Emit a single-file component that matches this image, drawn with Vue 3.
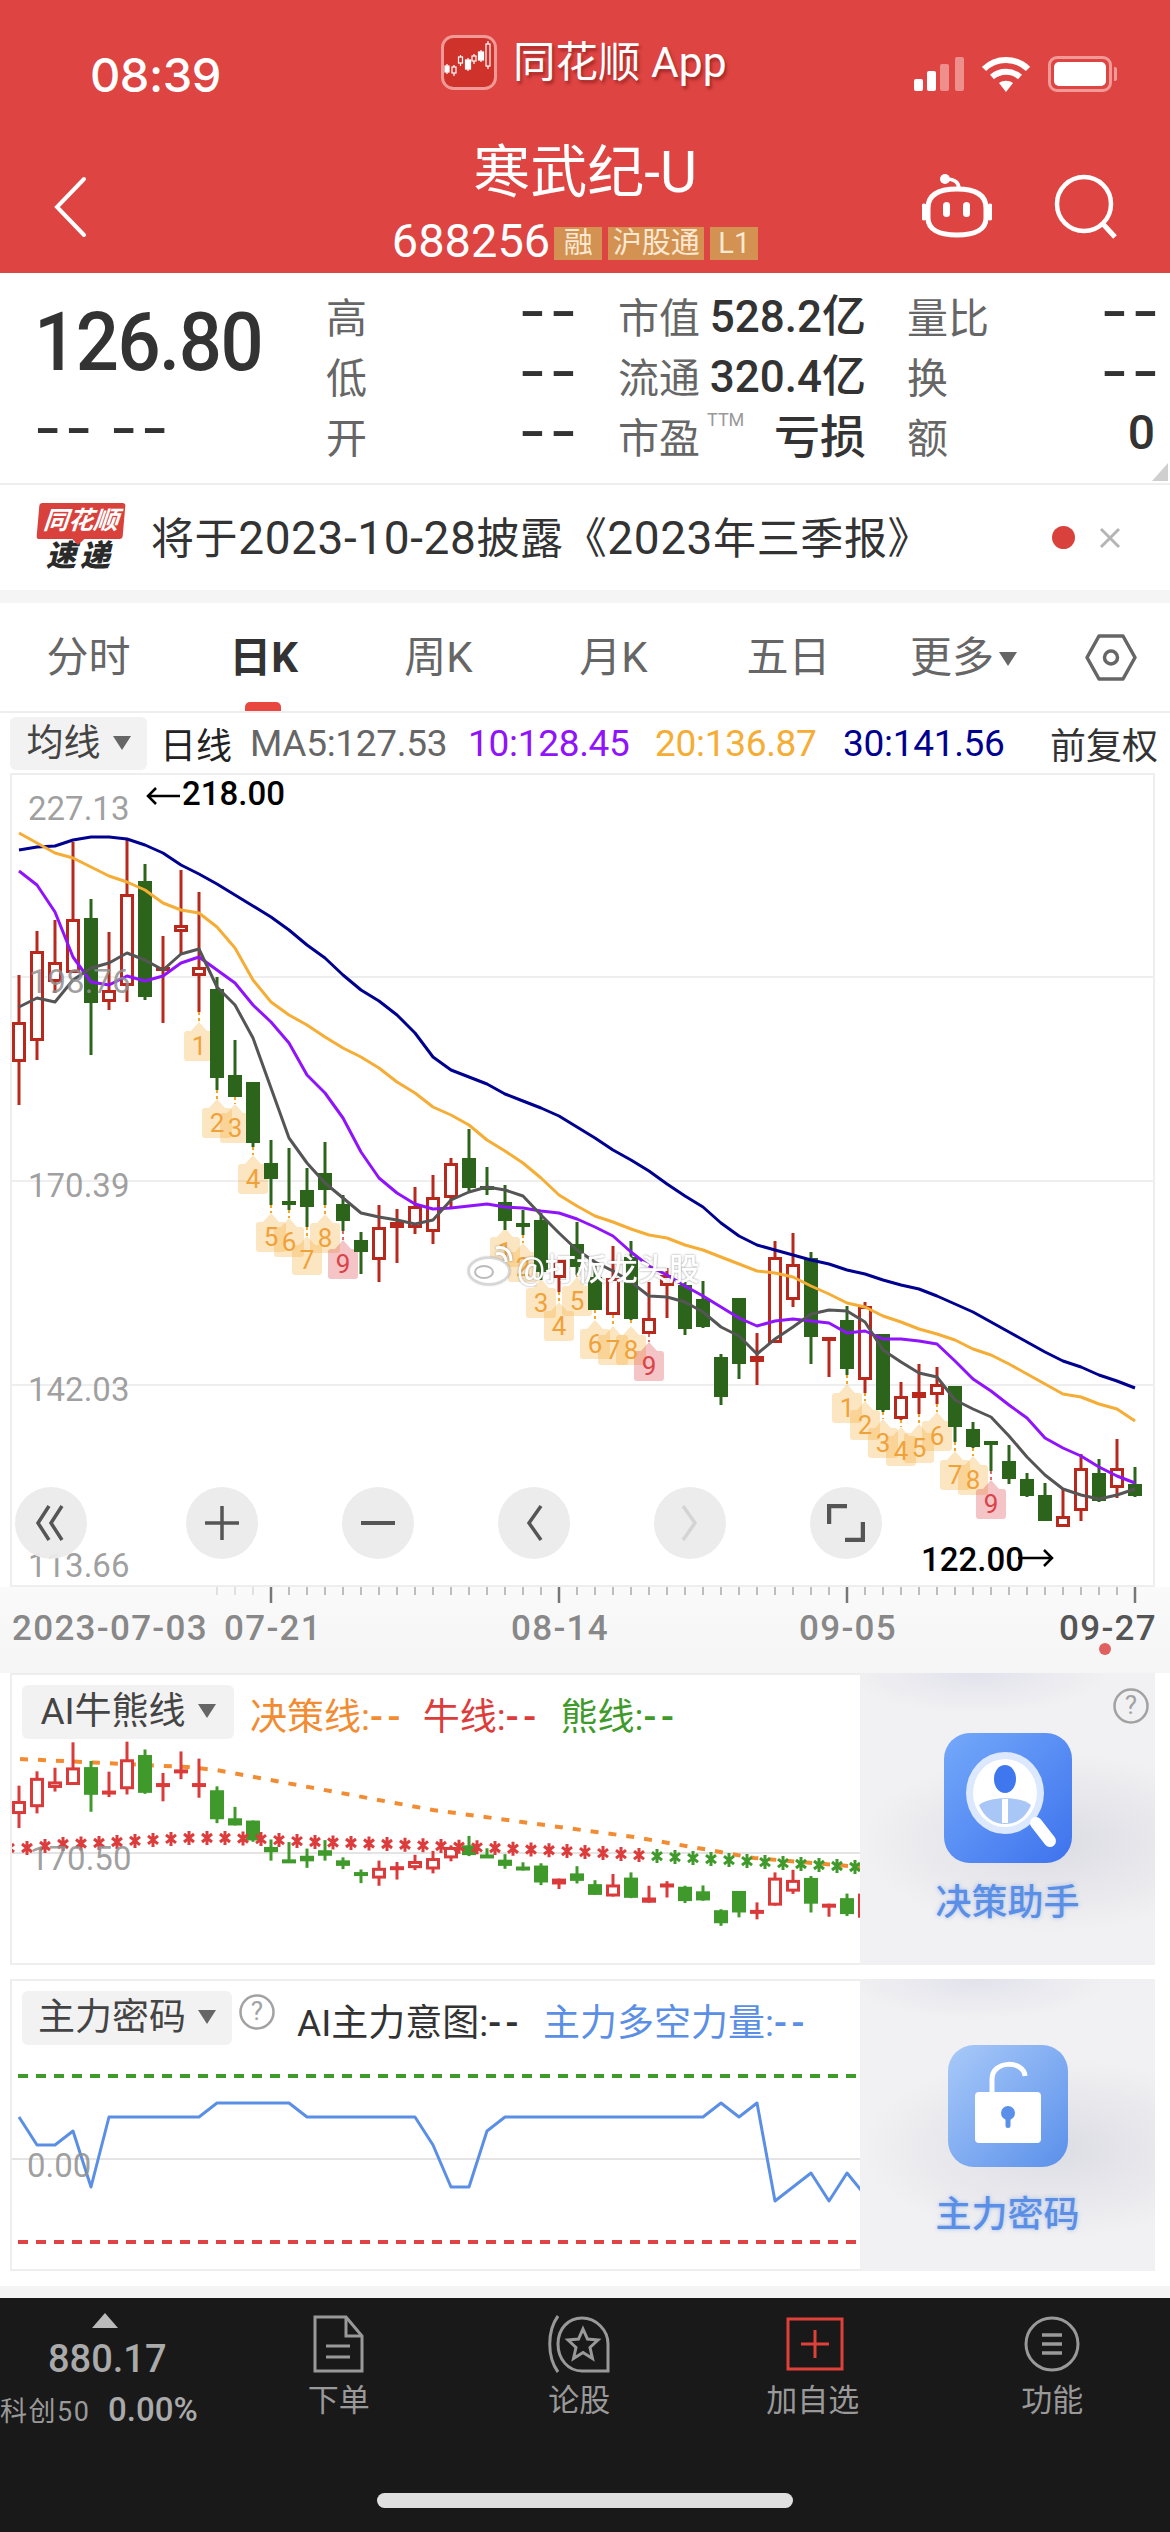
<template>
  <div class="page">
    <header class="topbar">
      <div class="status">
        <div class="time">08:39</div>
        <div class="applabel">
          <svg class="appicon" width="56" height="55" viewBox="0 0 56 55">
            <rect x="1.500" y="1.500" width="53" height="52" rx="11" fill="#cf322b" stroke="#ef9a96" stroke-width="3" />
            <g fill="#fff" stroke="#fff" stroke-width="1.200">
              <path d="M6 29v10M13 30v11M19.500 20v11M27 23v13M33 19v10M40 15v12M47 6v28" />
              <rect x="4" y="31" width="4" height="6" />
              <rect x="11" y="32" width="4" height="6" fill="#cf322b" />
              <rect x="17.500" y="22" width="4" height="6" fill="#cf322b" />
              <rect x="24.500" y="25" width="5" height="9" />
              <rect x="31" y="21" width="4" height="5" fill="#cf322b" />
              <rect x="37.500" y="17" width="5" height="8" />
              <rect x="45" y="9" width="4" height="22" fill="#cf322b" />
            </g>
          </svg>
          <span class="appname">同花顺 App</span>
        </div>
        <div class="sysicons">
          <svg width="50" height="34" viewBox="0 0 50 34">
            <rect x="0" y="22" width="9" height="12" rx="2" fill="#fff" />
            <rect x="13" y="14" width="9" height="20" rx="2" fill="#fff" />
            <rect x="26" y="7" width="9" height="27" rx="2" fill="#ef8f8c" />
            <rect x="41" y="0" width="9" height="34" rx="2" fill="#ef8f8c" />
          </svg>
          <svg width="48" height="36" viewBox="0 0 48 36">
            <path d="M2 13C14 1 34 1 46 13" fill="none" stroke="#fff" stroke-width="6" />
            <path d="M10 21c8-7 20-7 28 0" fill="none" stroke="#fff" stroke-width="6" />
            <path d="M17 27c4-3 10-3 14 0l-7 9z" fill="#fff" />
          </svg>
          <div class="battery"><div class="battery-fill"></div></div>
        </div>
      </div>
      <div class="titlebar">
        <svg class="back" width="36" height="62" viewBox="0 0 36 62">
          <path d="M32 3 5 31l27 28" fill="none" stroke="#fff" stroke-width="4" stroke-linecap="round" />
        </svg>
        <div class="titleblock">
          <div class="stockname">寒武纪-U</div>
          <div class="stockcode">
            <span class="codenum">688256</span>
            <span class="codetag t1">融</span>
            <span class="codetag t3">沪股通</span>
            <span class="codetag t1">L1</span>
          </div>
        </div>
        <div class="titleicons">
          <svg width="70" height="66" viewBox="0 0 70 66">
            <path d="M6 34C6 20 18 15 35 15s29 5 29 19v10c0 11-10 17-29 17S6 55 6 44z" fill="none" stroke="#fff" stroke-width="5" />
            <path d="M2 32v12M68 32v12" stroke="#fff" stroke-width="5" stroke-linecap="round" />
            <path d="M24 5c8 0 13 3 13 10" fill="none" stroke="#fff" stroke-width="3.500" />
            <circle cx="23" cy="5" r="5" fill="#fff" />
            <rect x="21" y="28" width="7" height="15" rx="3.500" fill="#fff" />
            <rect x="41" y="28" width="7" height="15" rx="3.500" fill="#fff" />
          </svg>
          <svg width="66" height="66" viewBox="0 0 66 66">
            <circle cx="30" cy="30" r="27" fill="none" stroke="#fff" stroke-width="4.500" />
            <path d="M49 50l12 13" stroke="#fff" stroke-width="5" />
          </svg>
        </div>
      </div>
    </header>

    <section class="quote">
      <div class="pricebox">
        <div class="price">126.80</div>
        <div class="change"><span class="changedash">--</span><span class="changedash">--</span></div>
      </div>
      <div class="quotegrid">
        <template v-for="row in quoteRows" :key="row[0]">
          <div class="cell"><span class="qlabel">{{ row[0] }}</span><span class="qvalue" :class="{ bigdash: row[1] === '--' }">{{ row[1] }}</span></div>
          <div class="cell">
            <span class="qlabel">{{ row[2] }}<sup v-if="row[2] === '市盈'" class="ttm">TTM</sup></span>
            <span class="qvalue" :class="{ loss: row[3] === '亏损' }">{{ row[3] }}</span>
          </div>
          <div class="cell"><span class="qlabel">{{ row[4] }}</span><span class="qvalue" :class="{ bigdash: row[5] === '--', zero: row[5] === '0' }">{{ row[5] }}</span></div>
        </template>
      </div>
      <div class="corner"></div>
    </section>

    <section class="notice">
      <div class="newslogo">
        <div class="newslogo-top">同花顺</div>
        <div class="newslogo-bottom">速递</div>
      </div>
      <div class="noticetext">将于<span class="num">2023-10-28</span>披露《<span class="num">2023</span>年三季报》</div>
      <span class="reddot"></span>
      <svg width="24" height="22" viewBox="0 0 24 22">
        <path d="M3 2l18 18M21 2 3 20" stroke="#b5b5b5" stroke-width="3" />
      </svg>
    </section>

    <nav class="tabs">
      <div v-for="t in tabs" :key="t" class="tab" :class="{ active: t === '日K' }">
        {{ t }}<span v-if="t === '更多'" class="caret small"></span>
      </div>
      <svg class="gear" width="52" height="47" viewBox="0 0 52 47">
        <path d="M14 2h24l12 21.500L38 45H14L2 23.500z" fill="none" stroke="#666" stroke-width="3.500" stroke-linejoin="round" />
        <circle cx="26" cy="23.500" r="6.500" fill="none" stroke="#666" stroke-width="3.500" />
      </svg>
    </nav>

    <div class="marow">
      <div class="selbtn mabtn">均线<span class="caret"></span></div>
      <span class="daily">日线</span>
      <span class="ma ma5">MA5:127.53</span>
      <span class="ma ma10">10:128.45</span>
      <span class="ma ma20">20:136.87</span>
      <span class="ma ma30">30:141.56</span>
      <span class="adjust">前复权</span>
    </div>

    <div class="chartbox">
      <svg class="mainchart" width="1141" height="810" viewBox="12 775 1141 810">
        <line v-for="g in [977, 1181, 1385]" :key="g" x1="12" x2="1153" :y1="g" :y2="g" stroke="#eeeeee" stroke-width="2" />

        <g v-for="t in tags" :key="t.i + '-' + t.label">
          <line :x1="t.x" :x2="t.x" :y1="t.low" :y2="t.top - 9" :stroke="t.pink ? '#e06a6a' : '#f5a623'" stroke-width="2" stroke-dasharray="3 3" />
          <path :d="t.path" :fill="t.pink ? 'rgba(222,70,78,0.32)' : 'rgba(245,166,35,0.28)'" />
        </g>

        <g v-for="c in candles" :key="c.i">
          <line :x1="c.x" :x2="c.x" :y1="c.high" :y2="c.low" :stroke="c.color" stroke-width="3" />
          <rect :x="c.x - 5.5" :y="c.top + 1.5" width="11" :height="Math.max(c.bottom - c.top - 3, 1)" :fill="c.up ? '#fff' : c.color" :stroke="c.color" stroke-width="3" />
        </g>

        <text v-for="t in tags" :key="'l' + t.i" class="tagtext" :x="t.x" :y="t.top + 24" :fill="t.pink ? '#d9434a' : '#f0a23a'">{{ t.label }}</text>

        <polyline v-for="m in maLines" :key="m.color" :points="m.points" fill="none" :stroke="m.color" stroke-width="3" stroke-linejoin="round" />

        <text class="axislabel" x="28" y="820">227.13</text>
        <text class="axislabel" x="29" y="993">198.76</text>
        <text class="axislabel" x="28" y="1197">170.39</text>
        <text class="axislabel" x="28" y="1401">142.03</text>
        <text class="axislabel" x="28" y="1577">113.66</text>

        <path d="M180 796h-32m8-8-8 8 8 8" fill="none" stroke="#000" stroke-width="2.500" />
        <text class="extreme" x="182" y="805">218.00</text>
        <text class="extreme" x="921" y="1571">122.00</text>
        <path d="M1018 1558h34m-8-8 8 8-8 8" fill="none" stroke="#000" stroke-width="2.500" />

        <g class="watermark">
          <ellipse cx="489" cy="1271" rx="20" ry="13" fill="#fff" stroke="#d8d8d8" stroke-width="2" />
          <ellipse cx="484" cy="1272" rx="9" ry="6" fill="none" stroke="#bbb" stroke-width="2" />
          <path d="M496 1254c6-2 10 2 10 8M496 1248c9-2 15 3 15 13" fill="none" stroke="#fff" stroke-width="3" />
          <text class="wmtext" x="517" y="1280">@打板龙头股</text>
        </g>
      </svg>
      <div class="chartbtns">
        <div class="roundbtn first">
          <svg width="36" height="40" viewBox="0 0 36 40"><path d="M16 3 5 20l11 17M29 3 18 20l11 17" fill="none" stroke="#555" stroke-width="3.500" /></svg>
        </div>
        <div class="roundbtn">
          <svg width="34" height="34" viewBox="0 0 34 34"><path d="M17 0v34M0 17h34" stroke="#555" stroke-width="3.500" /></svg>
        </div>
        <div class="roundbtn">
          <svg width="34" height="34" viewBox="0 0 34 34"><path d="M0 17h34" stroke="#555" stroke-width="4" /></svg>
        </div>
        <div class="roundbtn">
          <svg width="22" height="40" viewBox="0 0 22 40"><path d="M18 3 6 20l12 17" fill="none" stroke="#555" stroke-width="3.500" /></svg>
        </div>
        <div class="roundbtn">
          <svg width="22" height="40" viewBox="0 0 22 40"><path d="M4 3l12 17L4 37" fill="none" stroke="#d4d4d4" stroke-width="3.500" /></svg>
        </div>
        <div class="roundbtn">
          <svg width="38" height="38" viewBox="0 0 38 38"><path d="M2 20V2h18M36 18v18H18" fill="none" stroke="#555" stroke-width="4.500" /></svg>
        </div>
      </div>
    </div>

    <div class="timeaxis">
      <svg class="ticks" width="1170" height="20" viewBox="0 0 1170 20">
        <line v-for="t in ticks" :key="t.x" :x1="t.x" :x2="t.x" y1="0" :y2="t.major ? 16 : 8" :stroke="t.major ? '#777' : '#aaa'" :stroke-width="t.major ? 2.5 : 1.5" :opacity="t.fade" />
      </svg>
      <div class="datelabels">
        <span class="date d1">2023-07-03</span>
        <span class="date d2">07-21</span>
        <span class="date d3">08-14</span>
        <span class="date d4">09-05</span>
        <span class="date d5">09-27</span>
      </div>
      <span class="axisdot"></span>
    </div>

    <section class="panel panel1">
      <div class="panelchart">
        <svg width="848" height="288" viewBox="12 1675 848 288">
          <line x1="12" x2="860" y1="1853" y2="1853" stroke="#e4e4e4" stroke-width="2" />
          <polyline :points="decisionLine" fill="none" stroke="#f28c33" stroke-width="4" stroke-dasharray="8 10" />
          <g v-for="c in miniCandles" :key="c.i">
            <line :x1="c.x" :x2="c.x" :y1="c.high" :y2="c.low" :stroke="c.color" stroke-width="3" />
            <rect :x="c.x - 5.5" :y="c.top + 1.5" width="11" :height="Math.max(c.bottom - c.top - 3, 1)" :fill="c.up ? '#fff' : c.color" :stroke="c.color" stroke-width="3" />
          </g>
          <path v-for="s in stars" :key="s.x" :d="s.d" fill="none" :stroke="s.color" stroke-width="3" />
          <text class="axislabel" x="30" y="1870">170.50</text>
        </svg>
        <div class="panelhead">
          <div class="selbtn aibtn">AI牛熊线<span class="caret"></span></div>
          <span class="legend orange">决策线:<span class="ldash">--</span></span>
          <span class="legend red">牛线:<span class="ldash">--</span></span>
          <span class="legend green">熊线:<span class="ldash">--</span></span>
        </div>
      </div>
      <div class="promo">
        <svg class="help" width="36" height="36" viewBox="0 0 36 36">
          <circle cx="18" cy="18" r="16.500" fill="none" stroke="#a2a2a2" stroke-width="2.500" />
          <text x="18" y="26" class="helpmark">?</text>
        </svg>
        <svg class="promoicon first" width="128" height="130" viewBox="0 0 128 130">
          <defs>
            <linearGradient id="blueA" x1="0" y1="0" x2="1" y2="1">
              <stop offset="0" stop-color="#74a9fa" />
              <stop offset="1" stop-color="#3d72ee" />
            </linearGradient>
          </defs>
          <rect width="128" height="130" rx="26" fill="url(#blueA)" />
          <ellipse cx="61" cy="60" rx="39" ry="41" fill="#dbe8fd" />
          <ellipse cx="61" cy="60" rx="32" ry="34" fill="#fff" />
          <ellipse cx="61" cy="46" rx="11" ry="14" fill="#3f78ee" />
          <path d="M35 72c10-9 42-9 52 0-5 12-14 19-26 19s-21-7-26-19z" fill="#a8c6f6" />
          <path d="M58 66h6v24h-6z" fill="#fff" />
          <path d="M92 90l14 18" stroke="#fff" stroke-width="12" stroke-linecap="round" />
        </svg>
        <div class="promotext t-first">决策助手</div>
      </div>
    </section>

    <section class="panel panel2">
      <div class="panelchart">
        <svg width="848" height="288" viewBox="12 1981 848 288">
          <line x1="12" x2="860" y1="2159" y2="2159" stroke="#e4e4e4" stroke-width="2" />
          <line x1="18" x2="860" y1="2076" y2="2076" stroke="#3f9a2b" stroke-width="4" stroke-dasharray="10 8" />
          <line x1="18" x2="860" y1="2242" y2="2242" stroke="#e04343" stroke-width="4" stroke-dasharray="10 8" />
          <polyline :points="mainForce" fill="none" stroke="#5b8fe6" stroke-width="3" stroke-linejoin="round" />
          <text class="axislabel" x="27" y="2177">0.00</text>
        </svg>
        <div class="panelhead">
          <div class="selbtn forcebtn">主力密码<span class="caret"></span></div>
          <svg class="inlinehelp" width="36" height="36" viewBox="0 0 36 36">
            <circle cx="18" cy="18" r="16.500" fill="none" stroke="#a2a2a2" stroke-width="2.500" />
            <text x="18" y="26" class="helpmark">?</text>
          </svg>
          <span class="legend dark">AI主力意图:<span class="ldash">--</span></span>
          <span class="legend blue">主力多空力量:<span class="ldash">--</span></span>
        </div>
      </div>
      <div class="promo">
        <svg class="promoicon second" width="120" height="122" viewBox="0 0 120 122">
          <defs>
            <linearGradient id="blueB" x1="0" y1="0" x2="1" y2="1">
              <stop offset="0" stop-color="#a9caf9" />
              <stop offset="1" stop-color="#5a90ea" />
            </linearGradient>
          </defs>
          <rect width="120" height="122" rx="26" fill="url(#blueB)" />
          <path d="M44 50V34c0-19 32-19 33-3" fill="none" stroke="#fff" stroke-width="5" />
          <rect x="27" y="47" width="66" height="51" rx="4" fill="#fff" />
          <circle cx="60" cy="68" r="7" fill="#5a90ea" />
          <rect x="57.500" y="68" width="5" height="15" rx="2.500" fill="#5a90ea" />
        </svg>
        <div class="promotext t-second">主力密码</div>
      </div>
    </section>

    <div class="graybar"></div>

    <footer class="bottombar">
      <div class="indexbox">
        <span class="uptri"></span>
        <div class="indexnum">880.17</div>
        <div class="indexline"><span class="indexname">科创50</span><span class="indexpct">0.00%</span></div>
      </div>
      <div class="baritem">
        <svg width="54" height="58" viewBox="0 0 54 58">
          <path d="M3 2h31l16 19v35H3z" fill="none" stroke="#999" stroke-width="3" />
          <path d="M34 2v19h16M14 31h24M14 42h24" fill="none" stroke="#999" stroke-width="3" />
        </svg>
        <span>下单</span>
      </div>
      <div class="baritem">
        <svg width="62" height="58" viewBox="0 0 62 58">
          <path d="M34 56C20 56 10 44 10 29S20 3 34 3s26 12 26 26v27z" fill="none" stroke="#999" stroke-width="3" />
          <path d="M10 1C-1 16-1 42 10 57" fill="none" stroke="#999" stroke-width="3" />
          <path d="M35 14l4.500 10 10.500 1-8 7.500 2.500 11-9.500-6-9.500 6 2.500-11-8-7.500 10.500-1z" fill="none" stroke="#999" stroke-width="3" />
        </svg>
        <span>论股</span>
      </div>
      <div class="baritem">
        <svg class="addicon" width="58" height="58" viewBox="0 0 58 58">
          <rect x="2" y="4" width="54" height="50" fill="none" stroke="#e0403a" stroke-width="3" />
          <path d="M29 15v28M15 29h28" stroke="#e0403a" stroke-width="3" />
        </svg>
        <span>加自选</span>
      </div>
      <div class="baritem">
        <svg width="58" height="58" viewBox="0 0 58 58">
          <circle cx="29" cy="29" r="26" fill="none" stroke="#999" stroke-width="3" />
          <path d="M19 20h20M19 29h20M19 38h20" stroke="#999" stroke-width="3.500" />
        </svg>
        <span>功能</span>
      </div>
      <div class="homebar"></div>
    </footer>
  </div>
</template>

<script setup>
const quoteRows = [
  ['高', '--', '市值', '528.2亿', '量比', '--'],
  ['低', '--', '流通', '320.4亿', '换', '--'],
  ['开', '--', '市盈', '亏损', '额', '0']
]

const tabs = ['分时', '日K', '周K', '月K', '五日', '更多']

// high, body top, body bottom, low, read off the picture in page pixels
const raw = [
  ['r', 975, 1022, 1062, 1105], ['r', 931, 951, 1041, 1060], ['r', 920, 962, 982, 993],
  ['r', 842, 919, 973, 973], ['g', 899, 918, 1003, 1055], ['r', 932, 990, 1002, 1010],
  ['r', 840, 894, 986, 1002], ['g', 864, 881, 997, 1000], ['r', 936, 967, 970, 1023],
  ['r', 870, 925, 932, 955], ['r', 892, 967, 976, 1012], ['g', 977, 989, 1078, 1090],
  ['g', 1040, 1075, 1097, 1097], ['g', 1082, 1082, 1143, 1147], ['g', 1140, 1163, 1179, 1205],
  ['g', 1148, 1201, 1203, 1210], ['g', 1168, 1190, 1207, 1227], ['g', 1142, 1173, 1190, 1205],
  ['g', 1195, 1204, 1221, 1231], ['g', 1232, 1240, 1252, 1274], ['r', 1205, 1227, 1260, 1282],
  ['r', 1209, 1222, 1228, 1263], ['r', 1187, 1206, 1228, 1234], ['r', 1175, 1197, 1232, 1244],
  ['r', 1158, 1163, 1198, 1207], ['g', 1129, 1158, 1188, 1191], ['g', 1167, 1186, 1190, 1195],
  ['g', 1185, 1202, 1221, 1230], ['g', 1210, 1223, 1225, 1235], ['g', 1213, 1220, 1272, 1280],
  ['r', 1260, 1260, 1278, 1292], ['g', 1222, 1244, 1267, 1275], ['g', 1265, 1277, 1310, 1310],
  ['r', 1246, 1278, 1315, 1315], ['g', 1241, 1257, 1319, 1320], ['r', 1282, 1318, 1334, 1334],
  ['r', 1268, 1275, 1286, 1318], ['g', 1282, 1285, 1329, 1335], ['g', 1281, 1299, 1327, 1328],
  ['g', 1354, 1357, 1397, 1405], ['g', 1298, 1298, 1364, 1379], ['r', 1333, 1356, 1362, 1385],
  ['r', 1241, 1257, 1343, 1343], ['r', 1233, 1264, 1300, 1307], ['g', 1252, 1258, 1337, 1364],
  ['r', 1337, 1337, 1339, 1377], ['g', 1306, 1320, 1369, 1375], ['r', 1302, 1306, 1380, 1393],
  ['g', 1334, 1334, 1410, 1412], ['r', 1382, 1396, 1419, 1420], ['r', 1364, 1392, 1398, 1414],
  ['r', 1367, 1384, 1395, 1404], ['g', 1386, 1386, 1427, 1442], ['g', 1422, 1429, 1447, 1448],
  ['g', 1441, 1441, 1443, 1471], ['g', 1445, 1461, 1479, 1484], ['g', 1473, 1479, 1496, 1497],
  ['g', 1483, 1495, 1521, 1521], ['r', 1489, 1516, 1527, 1527], ['r', 1454, 1468, 1511, 1521],
  ['g', 1459, 1473, 1501, 1502], ['r', 1439, 1468, 1488, 1498], ['g', 1467, 1484, 1496, 1497]
]

const xAt = (i) => 19 + 18 * i

const buildCandles = (upColor, downColor, mapY) =>
  raw.map((c, i) => ({
    i,
    x: xAt(i),
    up: c[0] === 'r',
    color: c[0] === 'r' ? upColor : downColor,
    high: mapY(c[1]),
    top: mapY(c[2]),
    bottom: mapY(c[3]),
    low: mapY(c[4])
  }))

const candles = buildCandles('#b9281c', '#2c641b', (y) => y)
const miniCandles = buildCandles('#da3a3a', '#3f9a2b', (y) => 1801 + (y - 1022) * 0.326)

const ma5 = [1007, 998, 1002, 980, 968, 963, 953, 960, 970, 954, 949, 987, 1005, 1038, 1088, 1138, 1163, 1183, 1198, 1213, 1217, 1220, 1224, 1220, 1200, 1192, 1187, 1190, 1196, 1215, 1233, 1250, 1262, 1271, 1282, 1296, 1297, 1302, 1312, 1327, 1336, 1354, 1339, 1327, 1314, 1310, 1311, 1322, 1350, 1362, 1373, 1377, 1400, 1409, 1417, 1436, 1457, 1475, 1489, 1495, 1499, 1495, 1489]
const ma10 = [871, 885, 912, 957, 982, 985, 976, 981, 976, 963, 957, 970, 983, 1005, 1022, 1043, 1075, 1093, 1118, 1152, 1178, 1193, 1204, 1209, 1208, 1206, 1204, 1207, 1208, 1211, 1213, 1219, 1227, 1236, 1252, 1266, 1275, 1286, 1296, 1307, 1318, 1326, 1321, 1319, 1321, 1323, 1333, 1331, 1339, 1339, 1341, 1344, 1361, 1379, 1391, 1405, 1418, 1438, 1448, 1456, 1467, 1476, 1483]
const ma20 = [833, 843, 853, 858, 867, 876, 882, 890, 903, 910, 913, 927, 948, 980, 1002, 1015, 1025, 1037, 1048, 1057, 1068, 1082, 1093, 1107, 1115, 1125, 1140, 1151, 1163, 1178, 1195, 1206, 1216, 1222, 1229, 1235, 1238, 1245, 1250, 1257, 1264, 1271, 1273, 1277, 1286, 1294, 1303, 1307, 1316, 1322, 1329, 1334, 1340, 1349, 1355, 1364, 1374, 1384, 1394, 1397, 1404, 1409, 1421]
const ma30 = [850, 847, 846, 840, 837, 837, 839, 845, 853, 865, 874, 884, 895, 906, 917, 930, 945, 958, 975, 990, 1001, 1015, 1033, 1057, 1070, 1077, 1084, 1094, 1101, 1108, 1116, 1127, 1138, 1150, 1160, 1171, 1184, 1196, 1207, 1223, 1236, 1245, 1250, 1255, 1260, 1264, 1270, 1274, 1280, 1285, 1289, 1296, 1304, 1312, 1322, 1332, 1342, 1352, 1361, 1367, 1375, 1381, 1388]

const toPoints = (ys) => ys.map((y, i) => `${xAt(i)},${y}`).join(' ')

const maLines = [
  { color: '#000090', points: toPoints(ma30) },
  { color: '#f5ad35', points: toPoints(ma20) },
  { color: '#9013fe', points: toPoints(ma10) },
  { color: '#555555', points: toPoints(ma5) }
]

// candle index, digit, top of the label box
const rawTags = [
  [10, 1, 1031], [11, 2, 1108], [12, 3, 1113], [13, 4, 1164], [14, 5, 1222], [15, 6, 1227], [16, 7, 1245], [17, 8, 1223], [18, 9, 1249],
  [27, 1, 1237], [28, 2, 1252], [29, 3, 1288], [30, 4, 1311], [31, 5, 1286], [32, 6, 1329], [33, 7, 1335], [34, 8, 1335], [35, 9, 1351],
  [46, 1, 1393], [47, 2, 1410], [48, 3, 1428], [49, 4, 1436], [50, 5, 1433], [51, 6, 1421], [52, 7, 1460], [53, 8, 1465], [54, 9, 1489]
]

const tags = rawTags.map(([i, label, top]) => {
  const x = xAt(i)
  return {
    i,
    label,
    top,
    x,
    low: raw[i][4],
    pink: label === 9,
    path: `M${x} ${top - 9}L${x + 8} ${top}H${x + 12}q3 0 3 3V${top + 27}q0 3 -3 3H${x - 12}q-3 0 -3 -3V${top + 3}q0 -3 3 -3H${x - 8}Z`
  }
})

const ticks = raw.map((_, i) => ({
  x: xAt(i),
  major: [14, 30, 46, 62].includes(i),
  fade: i < 11 ? 0 : i < 14 ? 0.4 : 1
}))

const decisionLine = '20,1759 187,1767 216,1770 433,1810 522,1822 634,1837 709,1850 754,1858 861,1867'

const starY = [[9, 1848], [27, 1848], [63, 1844], [99, 1843], [134, 1841], [188, 1838], [224, 1838], [260, 1839], [314, 1842], [386, 1844], [440, 1846], [494, 1848], [566, 1851], [638, 1855], [728, 1860], [782, 1863], [855, 1867]]

const interpolate = (x) => {
  for (let k = 1; k < starY.length; k++) {
    if (x <= starY[k][0]) {
      const [x0, y0] = starY[k - 1]
      const [x1, y1] = starY[k]
      return y0 + ((y1 - y0) * (x - x0)) / (x1 - x0)
    }
  }
  return starY[starY.length - 1][1]
}

const stars = []
for (let x = 9; x < 860; x += 18) {
  const y = interpolate(x)
  stars.push({
    x,
    color: x < 650 ? '#dc3c3c' : '#3f9a2b',
    d: `M${x} ${y - 7}v14M${x - 5} ${y - 4}l10 8M${x + 5} ${y - 4}l-10 8`
  })
}

const forcePoints = [
  [0, 2117], [1, 2145], [2, 2145], [3, 2131], [4, 2187], [5, 2117], [10, 2117], [11, 2103], [15, 2103], [16, 2117], [22, 2117],
  [23, 2145], [24, 2187], [25, 2187], [26, 2131], [27, 2117], [38, 2117], [39, 2103], [40, 2117], [41, 2103], [42, 2201],
  [44, 2173], [45, 2201], [46, 2173], [47, 2195]
]
const mainForce = forcePoints.map(([i, y]) => `${xAt(i)},${y}`).join(' ')
</script>

<style>
html, body { margin: 0; background: #fff; }
</style>

<style scoped>
.page {
  width: 1170px;
  height: 2532px;
  overflow: hidden;
  background: #fff;
  font-family: Roboto, "Noto Sans CJK SC", sans-serif;
  color: #333;
}

/* red header */
.topbar {
  height: 273px;
  background: #dd4442;
  color: #fff;
}
.status {
  height: 130px;
  display: flex;
  align-items: flex-start;
}
.time {
  width: 351px;
  padding: 49px 0 0 90px;
  font-family: Inter, sans-serif;
  font-size: 47px;
  line-height: 52px;
  font-weight: 500;
  letter-spacing: -0.5px;
}
.applabel {
  display: flex;
  align-items: center;
  gap: 16px;
  padding-top: 35px;
}
.appname {
  font-size: 42.500px;
  line-height: 55px;
  text-shadow: 2px 3px 3px rgba(120, 20, 20, 0.55);
}
.sysicons {
  margin-left: auto;
  padding: 56px 58px 0 0;
  display: flex;
  align-items: center;
  gap: 18px;
}
.battery {
  position: relative;
  width: 64px;
  height: 36px;
  box-sizing: border-box;
  border: 3px solid #ef9a96;
  border-radius: 9px;
  padding: 3px;
}
.battery::after {
  content: "";
  position: absolute;
  right: -8px;
  top: 8px;
  width: 3px;
  height: 14px;
  border-radius: 0 2px 2px 0;
  background: #ef9a96;
}
.battery-fill {
  width: 100%;
  height: 100%;
  background: #fff;
  border-radius: 5px;
}
.titlebar {
  height: 143px;
  display: grid;
  grid-template-columns: 1fr auto 1fr;
}
.back {
  margin: 46px 0 0 52px;
}
.titleblock {
  display: flex;
  flex-direction: column;
  align-items: center;
}
.stockname {
  font-size: 57px;
  line-height: 58px;
  margin-top: 14px;
}
.stockcode {
  display: flex;
  align-items: center;
  gap: 6px;
  margin: 14px 20px 0 0;
}
.codenum {
  font-size: 47px;
  line-height: 50px;
  margin-right: -2px;
}
.codetag {
  background: #d39251;
  color: #fbe8d2;
  font-size: 29px;
  line-height: 33px;
  text-align: center;
  margin-top: 4px;
}
.codetag.t1 { width: 48px; }
.codetag.t3 { width: 96px; }
.titleicons {
  justify-self: end;
  display: flex;
  gap: 62px;
  padding: 44px 50px 0 0;
  align-items: flex-start;
}

/* quote */
.quote {
  position: relative;
  height: 210px;
  display: flex;
  border-bottom: 2px solid #eeeeee;
  box-sizing: content-box;
}
.pricebox {
  width: 326px;
  padding-left: 34px;
  box-sizing: border-box;
}
.price {
  font-size: 76px;
  line-height: 90px;
  font-weight: 500;
  margin-top: 24px;
  letter-spacing: -1.5px;
  transform: scaleY(1.08);
}
.change {
  display: flex;
  gap: 37px;
  margin-top: 12px;
}
.changedash {
  flex: none;
  white-space: nowrap;
  font-size: 44px;
  line-height: 60px;
  font-weight: 700;
  letter-spacing: 2px;
  color: #333;
  transform: scaleX(1.6);
  transform-origin: left center;
}
.quotegrid {
  display: grid;
  grid-template-columns: 247px 293px 289px;
  grid-auto-rows: 60px;
  padding-top: 12px;
}
.cell {
  display: flex;
  justify-content: space-between;
  align-items: center;
}
.cell:nth-child(3n + 2) { padding-left: 45px; }
.cell:nth-child(3n) { padding-left: 41px; }
.qlabel {
  position: relative;
  font-size: 41px;
  color: #666;
}
.qvalue {
  font-size: 44px;
  font-weight: 500;
  color: #333;
  margin-bottom: 4px;
}
.qvalue.bigdash {
  font-size: 44px;
  line-height: 50px;
  font-weight: 700;
  letter-spacing: 2px;
  white-space: nowrap;
  margin-bottom: 6px;
  transform: translateX(8px) scaleX(1.6);
  transform-origin: right center;
}
.qvalue.loss {
  font-size: 46px;
}
.qvalue.zero {
  font-size: 48px;
  line-height: 56px;
}
.ttm {
  position: absolute;
  left: 89px;
  top: 5px;
  font-size: 18px;
  line-height: 20px;
  color: #999;
}
.corner {
  position: absolute;
  right: 2px;
  bottom: 2px;
  width: 0;
  height: 0;
  border-left: 16px solid transparent;
  border-bottom: 18px solid #cfcfcf;
}

/* notice */
.notice {
  height: 105px;
  display: flex;
  align-items: center;
  border-bottom: 13px solid #f5f5f5;
  padding-left: 38px;
}
.newslogo {
  width: 96px;
}
.newslogo-top {
  position: relative;
  width: 86px;
  height: 36px;
  background: #d9423c;
  color: #fff;
  font-size: 25px;
  line-height: 36px;
  font-weight: 700;
  font-style: italic;
  text-align: center;
  border-radius: 3px;
  transform: skewX(-5deg);
}
.newslogo-top::after {
  content: "";
  position: absolute;
  left: 36px;
  bottom: -6px;
  width: 0;
  height: 0;
  border-left: 6px solid transparent;
  border-right: 6px solid transparent;
  border-top: 6px solid #d9423c;
}
.newslogo-bottom {
  font-size: 30px;
  line-height: 34px;
  font-weight: 900;
  font-style: italic;
  letter-spacing: 4px;
  color: #2a2a2a;
  padding-left: 8px;
}
.noticetext {
  width: 17px;
  flex: 1;
  padding-left: 17px;
  margin-bottom: 5px;
  font-size: 43px;
  letter-spacing: 0.600px;
  white-space: nowrap;
  color: #333;
}
.noticetext .num {
  font-size: 46px;
}
.reddot {
  width: 23px;
  height: 23px;
  border-radius: 50%;
  background: #d9423c;
  margin-right: 23px;
}
.notice svg {
  margin-right: 48px;
}

/* tabs */
.tabs {
  position: relative;
  height: 108px;
  display: flex;
  padding-left: 1px;
  border-bottom: 2px solid #eeeeee;
}
.tab {
  width: 175px;
  height: 108px;
  line-height: 110px;
  text-align: center;
  font-size: 42px;
  color: #666;
  position: relative;
}
.tab.active {
  color: #333;
  font-weight: 700;
}
.tab.active::after {
  content: "";
  position: absolute;
  left: 69px;
  bottom: 0;
  width: 36px;
  height: 9px;
  border-radius: 5px 5px 0 0;
  background: #e8483f;
}
.gear {
  position: absolute;
  left: 1085px;
  top: 31px;
}
.caret {
  display: inline-block;
  width: 0;
  height: 0;
  border-left: 9px solid transparent;
  border-right: 9px solid transparent;
  border-top: 14px solid #666;
  margin-left: 12px;
  vertical-align: 6px;
}
.caret.small {
  margin-left: 5px;
}

/* moving average row */
.marow {
  height: 60px;
  display: flex;
  align-items: center;
  padding-left: 10px;
  white-space: nowrap;
  font-size: 37px;
}
.selbtn {
  background: #f2f2f2;
  border-radius: 6px;
  color: #444;
  font-size: 37px;
  text-align: center;
  box-sizing: border-box;
}
.mabtn {
  width: 137px;
  height: 53px;
  line-height: 53px;
}
.daily {
  margin-left: 13px;
  width: 70px;
  font-size: 36px;
  color: #222;
}
.ma {
  letter-spacing: -0.3px;
}
.ma5 { margin-left: 20px; color: #666; width: 218px; }
.ma10 { color: #9013fe; width: 187px; }
.ma20 { color: #f5ad35; width: 188px; }
.ma30 { color: #000090; width: 207px; }
.adjust { font-size: 36px; color: #333; }

/* main chart */
.chartbox {
  position: relative;
  width: 1145px;
  height: 814px;
  margin-left: 10px;
  box-sizing: border-box;
  border: 2px solid #eeeeee;
  background: #fff;
}
.mainchart,
.panelchart svg {
  display: block;
}
.axislabel {
  font-size: 33px;
  fill: #8f8f8f;
  fill-opacity: 0.85;
}
.extreme {
  font-size: 33px;
  font-weight: 500;
  fill: #000;
}
.tagtext {
  font-size: 26px;
  text-anchor: middle;
}
.watermark {
  filter: drop-shadow(0 0 1px rgba(90, 90, 90, 0.6));
}
.wmtext {
  font-size: 31px;
  font-weight: 500;
  fill: #fff;
}
.chartbtns {
  position: absolute;
  left: 3px;
  top: 712px;
  display: flex;
}
.roundbtn {
  width: 72px;
  height: 72px;
  border-radius: 50%;
  background: rgba(235, 235, 235, 0.95);
  display: flex;
  align-items: center;
  justify-content: center;
  margin-right: 84px;
}
.roundbtn.first {
  margin-right: 99px;
}

/* time axis */
.timeaxis {
  position: relative;
  height: 86px;
  background: linear-gradient(#fafafa, #f5f5f5);
}
.ticks {
  display: block;
}
.datelabels {
  position: relative;
  height: 44px;
}
.date {
  position: absolute;
  top: 0;
  font-size: 35px;
  line-height: 44px;
  font-weight: 500;
  color: #888;
  letter-spacing: 1.300px;
}
.d1 { left: 12px; }
.d2 { left: 224px; }
.d3 { left: 511px; }
.d4 { left: 799px; }
.d5 { left: 1059px; color: #555; }
.axisdot {
  position: absolute;
  left: 1099px;
  top: 56px;
  width: 12px;
  height: 12px;
  border-radius: 50%;
  background: #e06060;
}

/* indicator panels */
.panel {
  display: flex;
  width: 1145px;
  height: 292px;
  margin-left: 10px;
  box-sizing: border-box;
}
.panel1 { margin-bottom: 14px; }
.panelchart {
  position: relative;
  width: 850px;
  height: 292px;
  box-sizing: border-box;
  border: 2px solid #eeeeee;
  border-right: 0;
}
.panelhead {
  position: absolute;
  left: 10px;
  top: 10px;
  display: flex;
  align-items: flex-start;
  white-space: nowrap;
}
.aibtn,
.forcebtn {
  height: 54px;
  line-height: 54px;
}
.aibtn { width: 212px; }
.forcebtn { width: 210px; }
.legend {
  font-size: 37px;
  line-height: 54px;
  margin-top: 5px;
}
.ldash {
  font-size: 38px;
  font-weight: 500;
  letter-spacing: 4.500px;
}
.orange { color: #f28c33; margin-left: 16px; }
.red { color: #dc3c3c; margin-left: 18px; }
.green { color: #3f9a2b; margin-left: 20px; }
.dark { color: #333; margin-left: 22px; }
.blue { color: #5b8fe6; margin-left: 20px; }
.inlinehelp {
  margin: 3px 0 0 7px;
}
.helpmark {
  font-size: 26px;
  fill: #a2a2a2;
  text-anchor: middle;
}
.promo {
  position: relative;
  flex: 1;
  display: flex;
  flex-direction: column;
  align-items: center;
  background:
    radial-gradient(ellipse 130px 40px at 40% 0%, #e2e2ec, transparent),
    radial-gradient(ellipse 190px 90px at 65% 58%, #dcdce4, transparent),
    #f1f1f3;
}
.help {
  position: absolute;
  right: 6px;
  top: 15px;
}
.promoicon.first {
  margin-top: 60px;
}
.promoicon.second {
  margin-top: 66px;
}
.promotext {
  font-size: 36px;
  line-height: 48px;
  color: #5b8fe6;
  font-weight: 500;
  text-shadow: 0 0 4px rgba(91, 143, 230, 0.5);
}
.t-first { margin-top: 16px; }
.t-second { margin-top: 24px; }

.graybar {
  height: 12px;
  margin-top: 15px;
  background: #f4f4f4;
}

/* bottom bar */
.bottombar {
  position: relative;
  height: 234px;
  background: #191919;
  display: flex;
  padding-top: 17px;
  box-sizing: border-box;
  color: #999;
}
.indexbox {
  flex: none;
  width: 220px;
  display: flex;
  flex-direction: column;
  align-items: flex-start;
  position: relative;
}
.uptri {
  width: 0;
  height: 0;
  border-left: 13px solid transparent;
  border-right: 13px solid transparent;
  border-bottom: 15px solid #bbb;
  margin: -2px 0 0 92px;
}
.indexnum {
  font-size: 38px;
  line-height: 46px;
  font-weight: 500;
  color: #aaa;
  margin: 8px 0 0 48px;
}
.indexline {
  display: flex;
  align-items: baseline;
  margin-top: 8px;
  white-space: nowrap;
}
.indexname {
  font-size: 27px;
  letter-spacing: 1.500px;
  width: 108px;
  color: #999;
}
.indexpct {
  font-size: 33px;
  font-weight: 500;
  color: #aaa;
}
.baritem {
  flex: none;
  width: 237.500px;
  display: flex;
  flex-direction: column;
  align-items: center;
  font-size: 31px;
  line-height: 40px;
}
.baritem:nth-child(3) { margin-left: 3px; }
.baritem:nth-child(4) { margin-left: -4px; }
.baritem:nth-child(5) { margin-left: 2px; }
.baritem svg {
  margin-bottom: 8px;
}
.baritem .addicon {
  margin-left: 5px;
}
.homebar {
  position: absolute;
  left: 377px;
  top: 195px;
  width: 416px;
  height: 15px;
  border-radius: 8px;
  background: #e0e0e0;
}
</style>
